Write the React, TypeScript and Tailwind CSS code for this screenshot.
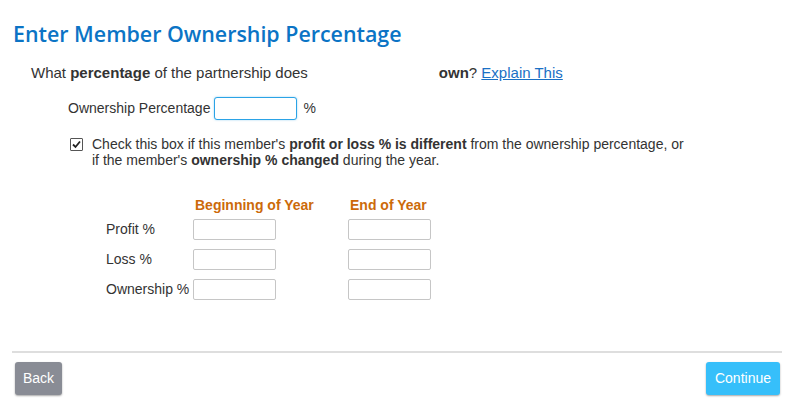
import React from "react";

function Box({ w = "w-[83px]", h = "h-[22px]" }: { w?: string; h?: string }) {
  return (
    <input
      type="text"
      className={`${w} ${h} border border-[#c6c6c6] rounded-[2px] bg-white outline-none`}
    />
  );
}

export default function App() {
  const rows = ["Profit %", "Loss %", "Ownership %"];

  return (
    <div className="w-[794px] h-[412px] bg-white font-['Liberation_Sans',Arial,sans-serif] text-[14px] text-[#333] overflow-hidden">
      <div className="px-[12px] pt-[19px]">
        <h1 className="font-['Open_Sans',sans-serif] font-semibold text-[21.4px] leading-[30px] text-[#0b74c5] ml-[1px]">
          Enter Member Ownership Percentage
        </h1>

        <p className="mt-[15px] ml-[19px] text-[15px] leading-[17px]">
          What <b>percentage</b> of the partnership does
          <span className="inline-block w-[131px]" />
          <b>own</b>?{" "}
          <a href="#" className="text-[#1a70c5] underline">
            Explain This
          </a>
        </p>

        <div className="mt-[16px] ml-[56px] flex items-center">
          <span>Ownership Percentage</span>
          <input
            type="text"
            className="ml-[4px] w-[83px] h-[23px] border border-[#2ba3e6] rounded-[3px] bg-white outline-none shadow-[0_0_2px_rgba(43,163,230,0.5)]"
          />
          <span className="ml-[6px]">%</span>
        </div>

        <div className="mt-[16px] ml-[58px] flex items-start">
          <span className="mt-[2px] w-[13px] h-[13px] border border-[#555] rounded-[1px] flex items-center justify-center bg-white shrink-0">
            <svg width="11" height="11" viewBox="0 0 11 11">
              <path d="M2 5.5 L4.5 8 L9 2.5" fill="none" stroke="#222" strokeWidth="1.8" />
            </svg>
          </span>
          <p className="ml-[9px] leading-[16px]">
            Check this box if this member's <b>profit or loss % is different</b> from the ownership percentage, or
            <br />
            if the member's <b>ownership % changed</b> during the year.
          </p>
        </div>

        <div className="mt-[29px] ml-[94px] grid grid-cols-[87px_155px_83px] gap-y-[9px] items-center">
          <span />
          <span className="ml-[2px] mb-[-3px] font-bold text-[14px] leading-[16px] text-[#cc6a0a] whitespace-nowrap">
            Beginning of Year
          </span>
          <span className="ml-[2px] mb-[-3px] font-bold text-[14px] leading-[16px] text-[#cc6a0a] whitespace-nowrap">
            End of Year
          </span>
          {rows.map((r) => (
            <React.Fragment key={r}>
              <span className="whitespace-nowrap">{r}</span>
              <Box h="h-[21px]" />
              <Box h="h-[21px]" />
            </React.Fragment>
          ))}
        </div>

        <div className="mt-[51px] h-[2px] bg-[#dedede]" />

        <div className="mt-[9px] flex justify-between px-[3px]">
          <button className="h-[33px] px-[8px] rounded-[3px] bg-[#898c95] text-white text-[14px] shadow-[0_1px_2px_rgba(0,0,0,0.35)]">
            Back
          </button>
          <button className="-mr-[1px] h-[33px] px-[9px] rounded-[3px] bg-[#36bffa] text-white text-[14px] shadow-[0_1px_2px_rgba(0,0,0,0.35)]">
            Continue
          </button>
        </div>
      </div>
    </div>
  );
}
